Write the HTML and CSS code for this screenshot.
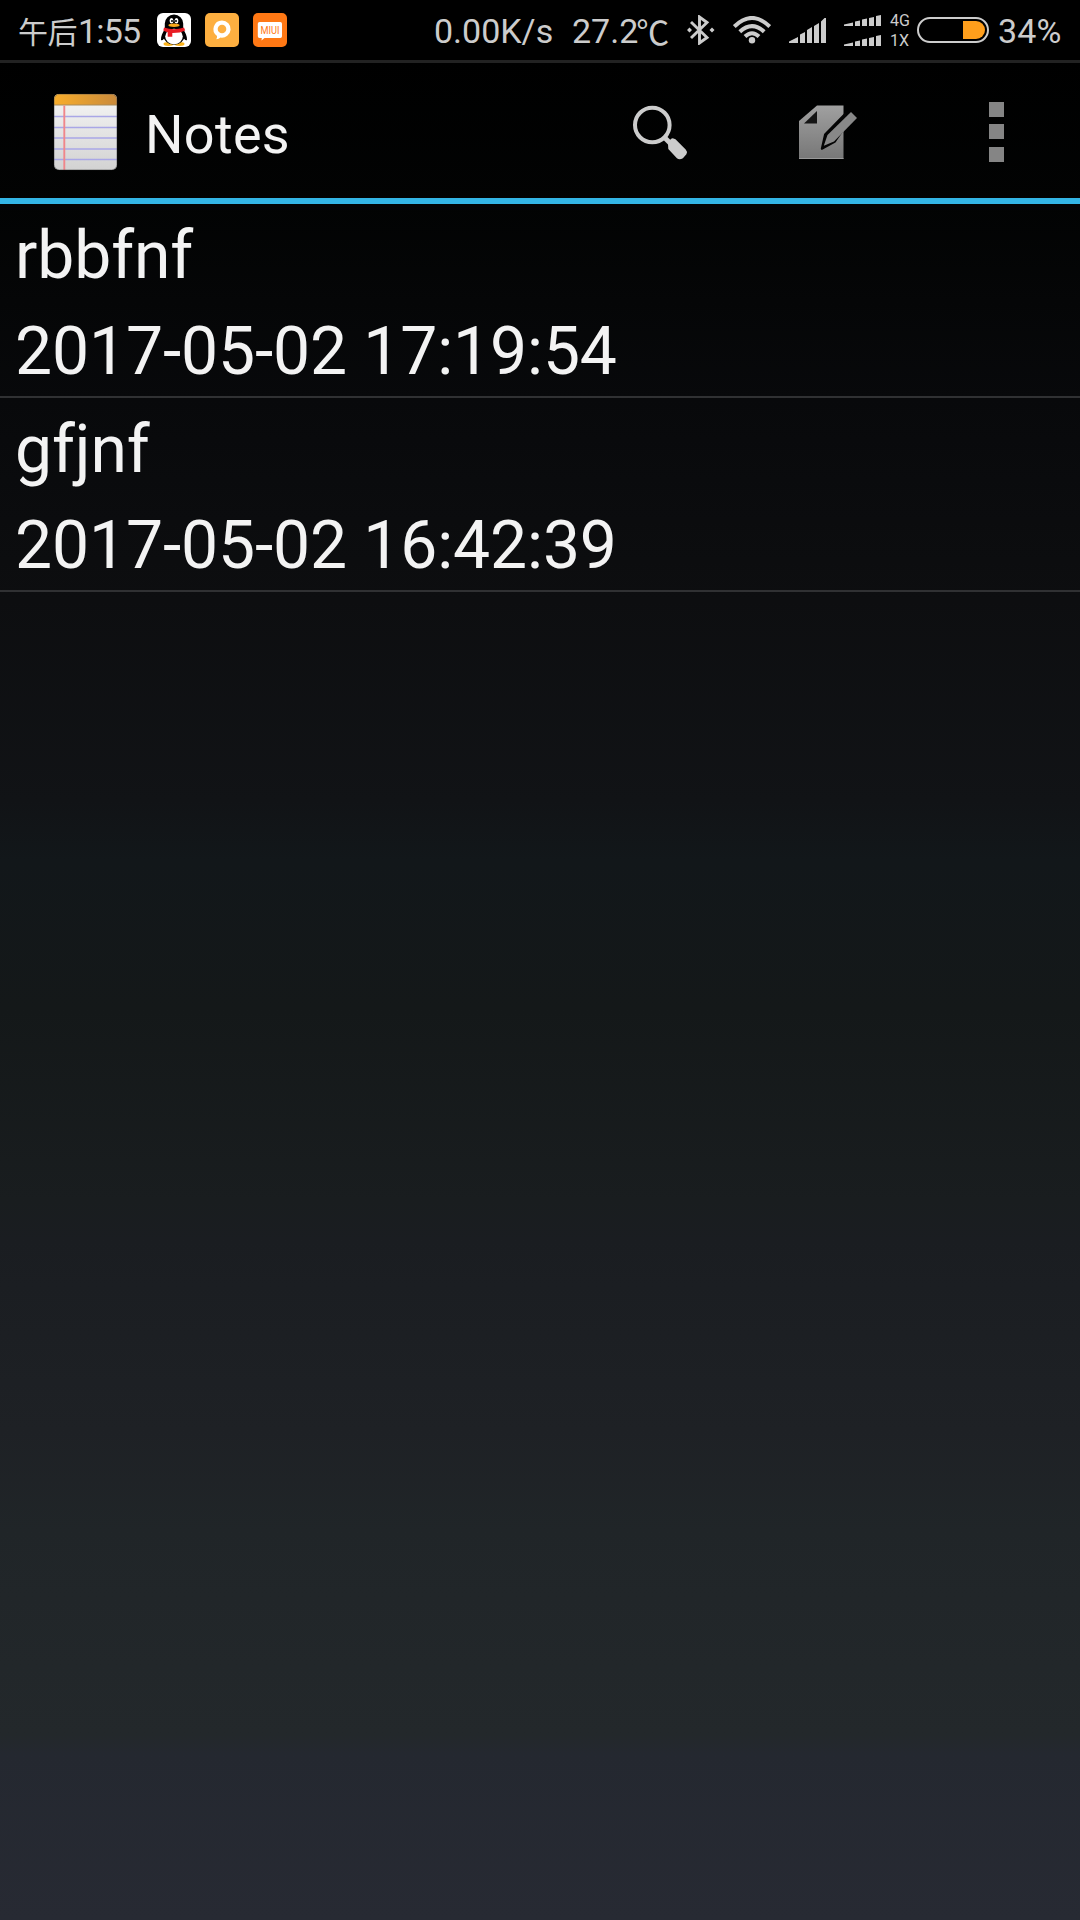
FILE: index.html
```html
<!DOCTYPE html>
<html lang="en">
<head>
<meta charset="utf-8">
<title>Notes</title>
<link rel="stylesheet" href="styles.css">
</head>
<body>
<header class="status">
  <div class="clock"><span class="cjk">午后</span><span class="time">1:55</span></div>
  <div class="apps">
    <svg width="34" height="34" viewBox="0 0 34 34">
      <rect width="34" height="34" rx="6" fill="#fff"/>
      <ellipse cx="11.500" cy="31" rx="5" ry="1.900" fill="#f9b21b"/>
      <ellipse cx="22.500" cy="31" rx="5" ry="1.900" fill="#f9b21b"/>
      <path d="M8 16C5.500 20 3.800 23 4 27q1.500 1 4-2.500h18q2.500 3.500 4 2.500c.2-4-1.500-7-4-11z" fill="#000"/>
      <ellipse cx="17" cy="22.500" rx="10.700" ry="9.300" fill="#000"/>
      <path d="M7.800 16V10.500a9.200 9 0 0 1 18.400 0V16z" fill="#000"/>
      <ellipse cx="17" cy="23.500" rx="8.800" ry="7.700" fill="#fff"/>
      <ellipse cx="14.500" cy="7.800" rx="1.900" ry="2.700" fill="#fff"/>
      <ellipse cx="19.500" cy="7.800" rx="1.900" ry="2.700" fill="#fff"/>
      <circle cx="15" cy="8" r="1"/><circle cx="19" cy="8" r="1"/>
      <ellipse cx="17" cy="12.300" rx="5.600" ry="1.700" fill="#f9a81b"/>
      <path d="M7 14.500q10 3.500 20 0l1.200 3q-5 2.600-12.900 2.500v3.800h-4.600v-4.500q-2.700-.5-4.400-1.800z" fill="#e81c24"/>
    </svg>
    <svg width="34" height="34" viewBox="0 0 34 34">
      <rect width="34" height="34" rx="5" fill="#fdaf40"/>
      <path d="M17 7.500a8.800 8.600 0 1 1-1.500 17.100q-1.700 1.600-4.200 1.700q1-1.700.7-3.300A8.800 8.600 0 0 1 17 7.500z" fill="#fff"/>
      <circle cx="17" cy="16" r="4.300" fill="#fdaf40"/>
    </svg>
    <svg width="34" height="34" viewBox="0 0 34 34">
      <rect width="34" height="34" rx="5" fill="#ff7814"/>
      <path d="M6.500 9h20.800q1.700 0 1.700 1.700v12.600q0 1.700-1.700 1.700H11.500l-3 2.500.3-2.500H6.500q-1.700 0-1.700-1.700V10.700Q4.800 9 6.500 9z" fill="#fff"/>
      <text class="miui" x="7.500" y="21" textLength="19" lengthAdjust="spacingAndGlyphs">MIUI</text>
    </svg>
  </div>
  <span class="rate">0.00K/s</span>
  <span class="temp">27.2<span class="degree">℃</span></span>
  <svg class="bluetooth" width="28" height="30" viewBox="0 0 28 30">
    <path d="M4 7 20 22.500 12.500 28V2L20 7.500 4 23" fill="none" stroke="#ccc" stroke-width="2.900"/>
    <path d="M0 15l2.500-2.500L5 15l-2.500 2.500zM22.500 15l2.500-2.500L27.500 15 25 17.500z" fill="#ccc"/>
  </svg>
  <svg class="wifi" width="38" height="28" viewBox="0 0 38 28">
    <g fill="none" stroke="#ccc" stroke-width="4"><path d="M1.300 10.500q17.700-17 35.400 0"/><path d="M6.800 15.800q12.200-11.500 24.400 0"/><path d="M12 20.500q7-6.500 14 0"/></g>
    <circle cx="19" cy="24.300" r="3.200" fill="#ccc"/>
  </svg>
  <svg class="signal" width="37" height="25" viewBox="0 0 37 25">
    <path d="M0 25v-1.500L9 19v6zM11 25v-8.500L16 14v11zM18 25V12l5-3v16zM25 25V8l5-3v20zM32 25V3.500L35.500 0H37v25z" fill="#ccc"/>
  </svg>
  <svg class="dual" width="37" height="31" viewBox="0 0 37 31">
    <g fill="#ccc"><path d="M0 11V9.500L9 7.500V11zM11 11V6.500l5-1V11zM18 11V4.500l5-1V11zM25 11V3l5-1v9zM32 11V1l5-1v11z"/>
    <path d="M0 31v-1.500l9-2V31zM11 31v-4.500l5-1V31zM18 31v-6.500l5-1V31zM25 31v-8l5-1v9zM32 31V21l5-1v11z"/></g>
  </svg>
  <div class="network"><span>4G</span><span>1X</span></div>
  <svg class="battery" width="72" height="26" viewBox="0 0 72 26">
    <rect x="1" y="1" width="70" height="24" rx="12" fill="none" stroke="#ccc" stroke-width="2"/>
    <path d="M46 4h13a9 9 0 0 1 0 18H46z" fill="#ff9f1c"/>
  </svg>
  <span class="percent">34%</span>
</header>

<nav class="bar">
  <svg class="logo" width="65" height="78" viewBox="0 0 65 78">
    <defs>
      <linearGradient id="paper" x2="0" y2="1"><stop stop-color="#f6f6f6"/><stop offset="1" stop-color="#d2d2d2"/></linearGradient>
      <linearGradient id="binding"><stop stop-color="#f9ae2b"/><stop offset="1" stop-color="#c98a3c"/></linearGradient>
      <clipPath id="pad"><rect x="1" y="1" width="63" height="76" rx="5"/></clipPath>
    </defs>
    <g clip-path="url(#pad)">
      <path d="M0 0h65v78H0z" fill="url(#paper)"/>
      <path d="M0 0h65v12H0z" fill="url(#binding)"/>
      <path d="M0 12h65" stroke="#a88b5c"/>
      <path d="M0 23.500h65M0 34.500h65M0 45h65M0 56h65M0 66.500h65" stroke="#a9a6e6" stroke-width="1.700"/>
      <path d="M11.300 12.500v66" stroke="#f0868a" stroke-width="1.900"/>
    </g>
    <rect x="1.300" y="1.300" width="62.400" height="75.400" rx="5" fill="none" stroke="#555" stroke-opacity=".5" stroke-width=".8"/>
  </svg>
  <h1 class="title">Notes</h1>
  <svg class="search" width="56" height="56" viewBox="0 0 56 56">
    <g fill="none" stroke="#ccc"><circle cx="20.300" cy="20" r="17.300" stroke-width="4"/><path d="M32 32l8 8" stroke-width="5"/></g>
    <path d="M36 38.500q0-1.500 1-2.500l2-2q1-1 2.500-.5l2 .7L53.700 44.500q2 2 .7 4.700l-3.500 4q-3.500 2-6 0L36.300 44z" fill="#ccc"/>
  </svg>
  <svg class="compose" width="62" height="58" viewBox="0 0 62 58">
    <defs><linearGradient id="sheet" x2="0" y2="1"><stop stop-color="#a0a0a0"/><stop offset="1" stop-color="#777"/></linearGradient></defs>
    <path d="M2 18 20 2.500h26.500V56H2z" fill="url(#sheet)"/>
    <path d="M2 55.500h44.500" stroke="#999"/>
    <path d="M7 20.500h13V8z" fill="#151515"/>
    <path d="M24.800 45.800 28 31.500 48 11v13L38 38.500z" fill="#050505" stroke="#050505" stroke-width="2" stroke-linejoin="round"/>
    <path d="M26.800 42.800 30.500 32 54 9l6 6L37 38.500z" fill="#888"/>
  </svg>
  <svg class="overflow" width="15" height="60" viewBox="0 0 15 60"><path d="M0 0h15v15H0zM0 22h15v15H0zM0 45h15v15H0z" fill="#858585"/></svg>
</nav>

<ul class="notes">
  <li class="note"><div>rbbfnf</div><div>2017-05-02 17:19:54</div></li>
  <li class="note"><div>gfjnf</div><div>2017-05-02 16:42:39</div></li>
</ul>
</body>
</html>
```

FILE: styles.css
```css
* { box-sizing: border-box; }
body {
  margin: 0;
  width: 1080px;
  height: 1920px;
  overflow: hidden;
  color: #f3f3f3;
  font-family: Roboto, "Noto Sans CJK SC", sans-serif;
  background: linear-gradient(#000 0, #000 60px, #020303 204px, #08090b 400px, #0d0e10 600px, #111316 800px, #12171a 860px, #141819 1010px, #191d1f 1200px, #1a1d21 1240px, #1e2125 1430px, #202528 1530px, #23282b 1735px, #242830 1755px, #272a33 1920px);
}
svg { display: block; flex: none; }
.status {
  display: flex;
  align-items: center;
  height: 63px;
  padding-left: 18px;
  border-bottom: 3px solid #222;
  background: #000;
  color: #ccc;
  font-size: 34px;
  line-height: 60px;
  white-space: nowrap;
}
.clock { display: flex; width: 139px; }
.cjk { width: 60px; font-family: "Noto Sans CJK SC", sans-serif; font-size: 30px; font-weight: 400; letter-spacing: -.5px; }
.time { padding-top: 1px; letter-spacing: -.8px; }
.apps { display: flex; gap: 14px; width: 277px; }
.rate, .temp, .percent { padding-top: 2px; }
.rate { width: 138px; }
.temp { display: flex; width: 115px; }
.degree { margin-left: -2px; font-family: "Noto Sans CJK SC", sans-serif; font-size: 33px; font-weight: 400; }
.wifi { margin-left: 18px; }
.signal { margin-left: 18px; }
.dual { margin-left: 18px; }
.network {
  display: flex;
  flex-direction: column;
  gap: 5px;
  width: 27px;
  margin-left: 9px;
  font-size: 16px;
  line-height: 15px;
}
.percent { margin-left: 9px; letter-spacing: .2px; }
.miui { font: 400 11px Roboto, sans-serif; fill: #ff7814; }

.bar {
  display: flex;
  align-items: center;
  height: 141px;
  padding: 2px 0 0 53px;
  border-bottom: 6px solid #33b5e5;
}
.title { width: 487px; margin: 5px 0 0 27px; font-size: 54px; font-weight: 400; letter-spacing: .3px; }
.search { margin-top: 2px; }
.compose { margin-left: 109px; }
.overflow { margin-left: 130px; }

.notes { margin: 0; padding: 0; list-style: none; }
.note {
  height: 194px;
  padding-left: 15px;
  border-bottom: 2px solid #303133;
  font-size: 66px;
  letter-spacing: -.12px;
}
.note div { height: 96px; padding-top: 7px; line-height: 89px; }
```
